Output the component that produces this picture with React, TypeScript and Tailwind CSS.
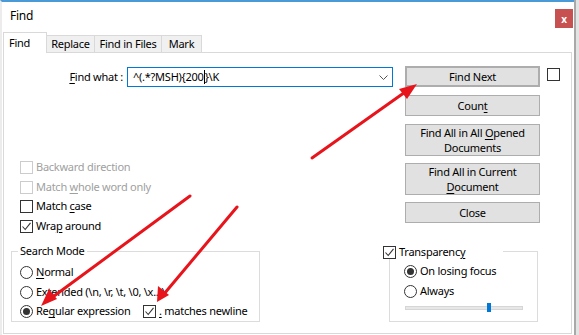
import type { ReactNode } from 'react'

function Box({ checked, disabled }: { checked?: boolean; disabled?: boolean }) {
  return (
    <span
      className={`flex h-[13px] w-[13px] shrink-0 items-center justify-center border bg-white ${
        disabled ? 'border-[#cccccc]' : 'border-[#333333]'
      }`}
    >
      {checked && (
        <svg width="11" height="11" viewBox="0 0 11 11">
          <path d="M1.5 5.5 L4.2 8.5 L9.5 1.8" fill="none" stroke="#333333" strokeWidth="1.1" />
        </svg>
      )}
    </span>
  )
}

function Radio({ checked }: { checked?: boolean }) {
  return (
    <span className="flex h-[13px] w-[13px] shrink-0 items-center justify-center rounded-full border border-[#333333] bg-white">
      {checked && <span className="h-[7px] w-[7px] rounded-full bg-[#333333]" />}
    </span>
  )
}

function U({ children }: { children: ReactNode }) {
  return <span className="underline underline-offset-2">{children}</span>
}

const btn =
  'flex w-[135px] flex-col items-center justify-center border border-[#adadad] bg-[#e1e1e1] leading-[15px]'

export default function App() {
  return (
    <div className="relative flex h-[335px] w-[579px] overflow-hidden whitespace-nowrap bg-[#e3e3e3] font-['Noto_Sans',sans-serif] text-[11px] tracking-[-0.25px] text-black">
      <div className="flex h-[335px] w-[574px] flex-col border-t-2 border-l-2 border-t-[#4a9ad8] border-l-[#ececec] bg-white">
        {/* title bar */}
        <div className="flex h-[30px] items-start justify-between">
          <span className="mt-[6px] pl-[8px] text-[12px] leading-[16px]">Find</span>
          <span className="mt-[7px] mr-[1px] flex h-[19px] w-[18px] items-center justify-center bg-[#c75050] text-[10px] font-bold leading-none text-white">
            x
          </span>
        </div>

        {/* tabs */}
        <div className="flex h-[20px] items-end pl-[1px]">
          <div className="relative z-10 -mb-px flex h-[21px] w-[44px] items-center border border-b-0 border-[#d9d9d9] bg-white pl-[5px]">
            Find
          </div>
          <div className="flex h-[17px] w-[48px] items-center justify-center border-t border-r border-[#d9d9d9] bg-[#f0f0f0]">
            Replace
          </div>
          <div className="flex h-[17px] w-[67px] items-center justify-center border-t border-r border-[#d9d9d9] bg-[#f0f0f0]">
            Find in Files
          </div>
          <div className="flex h-[17px] w-[40px] items-center justify-center border-t border-r border-[#d9d9d9] bg-[#f0f0f0]">
            Mark
          </div>
        </div>

        {/* panel */}
        <div className="ml-[1px] flex h-[282px] w-[569px] flex-col border border-[#d9d9d9] bg-white">
          <div className="flex h-[191px]">
            {/* left column */}
            <div className="flex w-[389px] flex-col">
              <div className="mt-[14px] flex h-[20px] items-center">
                <span className="w-[119px] text-right">
                  <U>F</U>ind what :
                </span>
                <div className="ml-[4px] flex h-[20px] w-[266px] items-center justify-between border border-[#0078d7] pl-[5px] pr-[4px]">
                  <span className="flex items-center whitespace-pre">
                    {'^(.*?MSH){200'}
                    <span className="h-[14px] w-px bg-black" />
                    {'}\\K'}
                  </span>
                  <svg width="9" height="5" viewBox="0 0 9 5">
                    <path d="M0.5 0.5 L4.5 4.5 L8.5 0.5" fill="none" stroke="#555555" strokeWidth="1" />
                  </svg>
                </div>
              </div>

              <div className="mt-[71px] flex flex-col pl-[16px]">
                <div className="flex h-[19px] items-center gap-[3px] text-[#a0a0a0]">
                  <Box disabled />
                  <span>Backward direction</span>
                </div>
                <div className="flex h-[20px] items-center gap-[3px] text-[#a0a0a0]">
                  <Box disabled />
                  <span>
                    Match <U>w</U>hole word only
                  </span>
                </div>
                <div className="flex h-[19px] items-center gap-[3px]">
                  <Box />
                  <span>
                    Match <U>c</U>ase
                  </span>
                </div>
                <div className="flex h-[20px] items-center gap-[3px]">
                  <Box checked />
                  <span>
                    Wra<U>p</U> around
                  </span>
                </div>
              </div>
            </div>

            {/* right column */}
            <div className="ml-[12px] flex flex-col">
              <div className={`${btn} mt-[13px] h-[21px] border-2 border-[#0078d7]`}>Find Next</div>
              <div className={`${btn} mt-[8px] h-[21px]`}>
                <span>
                  Coun<U>t</U>
                </span>
              </div>
              <div className={`${btn} mt-[8px] h-[32px]`}>
                <span>
                  Find All in All <U>O</U>pened
                </span>
                <span>Documents</span>
              </div>
              <div className={`${btn} mt-[7px] h-[32px]`}>
                <span>Find All in Current</span>
                <span>
                  <U>D</U>ocument
                </span>
              </div>
              <div className={`${btn} mt-[7px] h-[21px]`}>Close</div>
            </div>

            <div className="mt-[15px] ml-[7px]">
              <Box />
            </div>
          </div>

          {/* bottom groups */}
          <div className="flex items-start">
            <div className="mt-[7px] ml-[7px] flex h-[71px] w-[249px] flex-col border border-[#dcdcdc]">
              <span className="-mt-[9px] ml-[6px] w-fit bg-white px-[2px] leading-[16px]">Search Mode</span>
              <div className="mt-[3px] flex flex-col pl-[8px]">
                <div className="flex h-[20px] items-center gap-[3px]">
                  <Radio />
                  <span>
                    <U>N</U>ormal
                  </span>
                </div>
                <div className="flex h-[20px] items-center gap-[3px]">
                  <Radio />
                  <span>
                    Ex<U>t</U>ended (\n, \r, \t, \0, \x...)
                  </span>
                </div>
                <div className="flex h-[19px] items-center">
                  <div className="flex w-[123px] items-center gap-[3px]">
                    <Radio checked />
                    <span>
                      Re<U>g</U>ular expression
                    </span>
                  </div>
                  <div className="flex items-center gap-[3px]">
                    <Box checked />
                    <span>
                      <U>.</U> matches newline
                    </span>
                  </div>
                </div>
              </div>
            </div>

            <div className="mt-[7px] ml-[129px] flex h-[71px] w-[149px] flex-col border border-[#dcdcdc]">
              <div className="-mt-[7px] -ml-[7px] flex h-[14px] w-[120px] items-center gap-[3px] bg-white">
                <Box checked />
                <span>
                  Transparenc<U>y</U>
                </span>
              </div>
              <div className="mt-[2px] flex flex-col pl-[14px]">
                <div className="flex h-[20px] items-center gap-[3px]">
                  <Radio checked />
                  <span>On losing focus</span>
                </div>
                <div className="flex h-[20px] items-center gap-[3px]">
                  <Radio />
                  <span>Always</span>
                </div>
                <div className="mt-[2px] flex h-[9px] items-center pl-[1px]">
                  <span className="h-[4px] w-[82px] border-y border-l border-[#d6d6d6] bg-[#e7e7e7]" />
                  <span className="h-[9px] w-[4px] bg-[#0078d7]" />
                  <span className="h-[4px] w-[32px] border-y border-r border-[#d6d6d6] bg-[#e7e7e7]" />
                </div>
              </div>
            </div>
          </div>
        </div>
      </div>
      <div className="h-[335px] w-[2px] bg-[#a9a9a9]" />

      {/* red annotation arrows */}
      <svg className="pointer-events-none absolute inset-0" width="579" height="335" viewBox="0 0 579 335">
        <g stroke="#e8141b" strokeWidth="3" strokeLinecap="round" fill="#e8141b">
          <line x1="312" y1="158" x2="408" y2="90" />
          <line x1="190" y1="196" x2="50" y2="299" />
          <line x1="237" y1="207" x2="164" y2="294" />
        </g>
        <g fill="#e8141b">
          <polygon points="417,84 399,89 407,99" />
          <polygon points="41,306 49,289 57,299" />
          <polygon points="157,302 158,286 169,295" />
        </g>
      </svg>
    </div>
  )
}
